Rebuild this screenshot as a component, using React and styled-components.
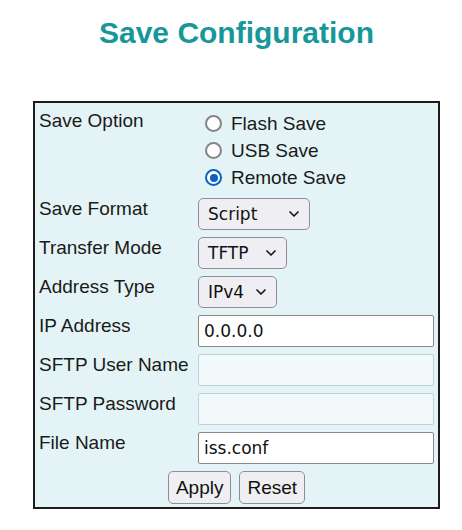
import React from "react";
import styled, { createGlobalStyle } from "styled-components";

const Global = createGlobalStyle`
  html, body { margin: 0; padding: 0; background: #ffffff; }
  body { font-family: "Liberation Sans", Arial, sans-serif; }
`;

const Page = styled.div`
  width: 407px;
  margin-left: 33px;
  padding-top: 16px;
`;

const Title = styled.h1`
  margin: 0 0 51px 0;
  text-align: center;
  font-family: "Liberation Sans", Arial, sans-serif;
  font-weight: bold;
  font-size: 30px;
  line-height: 34px;
  color: #16989b;
`;

const Panel = styled.div`
  box-sizing: border-box;
  width: 407px;
  border: 2px solid #1c1c1c;
  background: #e4f4f6;
  display: grid;
  grid-template-columns: 159px 1fr;
  row-gap: 7px;
  padding: 7px 4px 3px 4px;
`;

const Label = styled.div`
  font-size: 19px;
  line-height: 21px;
  color: #1a1a1a;
  white-space: nowrap;
`;

const RadioGroup = styled.div`
  display: flex;
  flex-direction: column;
`;

const RadioRow = styled.div`
  height: 27px;
  display: flex;
  align-items: center;
  padding-left: 7px;
  gap: 9px;
  font-size: 19px;
  color: #1a1a1a;
`;

const RadioCircle = styled.span`
  box-sizing: border-box;
  width: 17px;
  height: 17px;
  border-radius: 50%;
  border: 2px solid ${(p) => (p.$on ? "#0b62c4" : "#858585")};
  background: #ffffff;
  display: flex;
  align-items: center;
  justify-content: center;
  &::after {
    content: "";
    width: 8px;
    height: 8px;
    border-radius: 50%;
    background: ${(p) => (p.$on ? "#0b62c4" : "transparent")};
  }
`;

const SelectBox = styled.div`
  box-sizing: border-box;
  width: ${(p) => p.$w}px;
  height: 32px;
  border: 1.5px solid #8e8e98;
  border-radius: 5px;
  background: #efeff3;
  display: flex;
  align-items: center;
  justify-content: space-between;
  padding: 0 10px 0 9px;
  font-family: "DejaVu Sans", Tahoma, sans-serif;
  font-size: 17px;
  color: #111;
`;

const Input = styled.div`
  box-sizing: border-box;
  width: 236px;
  height: 32px;
  border: 1.5px solid ${(p) => (p.$disabled ? "#c0cfd2" : "#8a8a8a")};
  border-radius: 2px;
  background: ${(p) => (p.$disabled ? "#f1f9fa" : "#ffffff")};
  display: flex;
  align-items: center;
  padding-left: 5px;
  font-family: "DejaVu Sans", Tahoma, sans-serif;
  font-size: 17px;
  color: #111;
`;

const ButtonRow = styled.div`
  grid-column: 1 / -1;
  display: flex;
  justify-content: center;
  gap: 8px;
`;

const Button = styled.button`
  box-sizing: border-box;
  height: 33px;
  padding: 0 7px;
  border: 1.5px solid #8e8e98;
  border-radius: 5px;
  background: #efeff3;
  font-family: "Liberation Sans", Arial, sans-serif;
  font-size: 19px;
  color: #111;
`;

const Chevron = () => (
  <svg width="10" height="6" viewBox="0 0 10 6">
    <path d="M1 1 L5 5 L9 1" fill="none" stroke="#1a1a1a" strokeWidth="1.7" strokeLinecap="round" strokeLinejoin="round" />
  </svg>
);

const Select = ({ value, w }) => (
  <SelectBox $w={w}>
    <span>{value}</span>
    <Chevron />
  </SelectBox>
);

export default function App() {
  return (
    <>
      <Global />
      <Page>
        <Title>Save Configuration</Title>
        <Panel>
          <Label>Save Option</Label>
          <RadioGroup>
            <RadioRow><RadioCircle />Flash Save</RadioRow>
            <RadioRow><RadioCircle />USB Save</RadioRow>
            <RadioRow><RadioCircle $on />Remote Save</RadioRow>
          </RadioGroup>

          <Label>Save Format</Label>
          <Select value="Script" w={112} />

          <Label>Transfer Mode</Label>
          <Select value="TFTP" w={89} />

          <Label>Address Type</Label>
          <Select value="IPv4" w={79} />

          <Label>IP Address</Label>
          <Input>0.0.0.0</Input>

          <Label>SFTP User Name</Label>
          <Input $disabled />

          <Label>SFTP Password</Label>
          <Input $disabled />

          <Label>File Name</Label>
          <Input>iss.conf</Input>

          <ButtonRow>
            <Button>Apply</Button>
            <Button>Reset</Button>
          </ButtonRow>
        </Panel>
      </Page>
    </>
  );
}
